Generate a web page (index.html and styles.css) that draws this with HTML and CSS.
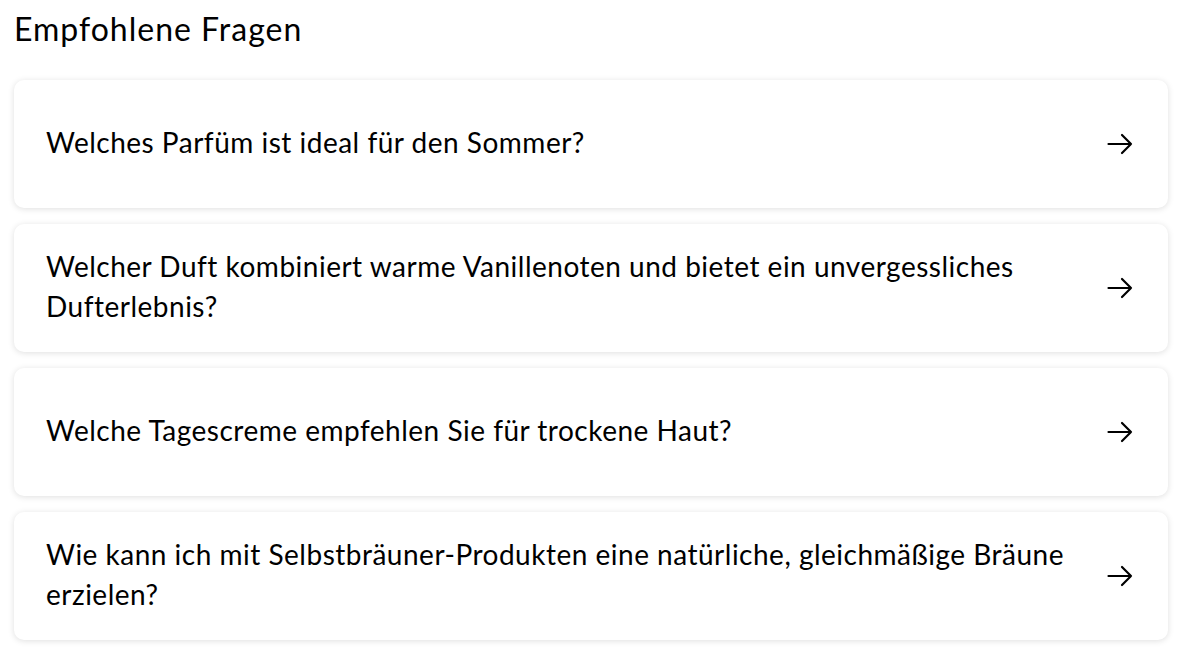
FILE: index.html
```html
<!DOCTYPE html>
<html lang="de">
<head>
  <meta charset="UTF-8" />
  <meta name="viewport" content="width=device-width, initial-scale=1" />
  <title>Empfohlene Fragen</title>
  <link rel="stylesheet" href="styles.css">
</head>
<body>

<section class="suggestions">
  <h2>Empfohlene Fragen</h2>

  <ul class="question-list">
    <li class="question">
      <span class="question-text">Welches Parfüm ist ideal für den Sommer?</span>
      <svg class="arrow" viewBox="0 0 26 26"><path d="M1.5 13h22.5M15 4l9 9-9 9" /></svg>
    </li>
    <li class="question">
      <span class="question-text">Welcher Duft kombiniert warme Vanillenoten und bietet ein unvergessliches Dufterlebnis?</span>
      <svg class="arrow" viewBox="0 0 26 26"><path d="M1.5 13h22.5M15 4l9 9-9 9" /></svg>
    </li>
    <li class="question">
      <span class="question-text">Welche Tagescreme empfehlen Sie für trockene Haut?</span>
      <svg class="arrow" viewBox="0 0 26 26"><path d="M1.5 13h22.5M15 4l9 9-9 9" /></svg>
    </li>
    <li class="question">
      <span class="question-text">Wie kann ich mit Selbstbräuner-Produkten eine natürliche, gleichmäßige Bräune erzielen?</span>
      <svg class="arrow" viewBox="0 0 26 26"><path d="M1.5 13h22.5M15 4l9 9-9 9" /></svg>
    </li>
  </ul>
</section>

</body>
</html>
```

FILE: styles.css
```css
body {
  font-family: 'Lato', 'Noto Sans', sans-serif;
  background: #ffffff;
  color: #000000;
  margin: 0;
  padding: 8px 14px;
}
h2 {
  font-size: 32px;
  font-weight: 400;
  letter-spacing: 1px;
  line-height: 42px;
  margin: 0 0 30px 0;
}
.question-list {
  list-style: none;
  margin: 0;
  padding: 0;
  display: flex;
  flex-direction: column;
  gap: 16px;
}
.question {
  display: flex;
  align-items: center;
  justify-content: space-between;
  gap: 40px;
  min-height: 128px;
  box-sizing: border-box;
  padding: 22px 35px 26px 32px;
  background: #fff;
  border-radius: 10px;
  box-shadow: 0 1px 6px rgba(0, 0, 0, 0.13);
  cursor: pointer;
}
.question-text {
  font-size: 28px;
  letter-spacing: 0.5px;
  line-height: 40px;
}
svg.arrow {
  flex: none;
  width: 26px;
  height: 26px;
  margin-top: 4px;
  fill: none;
  stroke: #000;
  stroke-width: 2.2;
  stroke-linecap: round;
  stroke-linejoin: round;
}
```
